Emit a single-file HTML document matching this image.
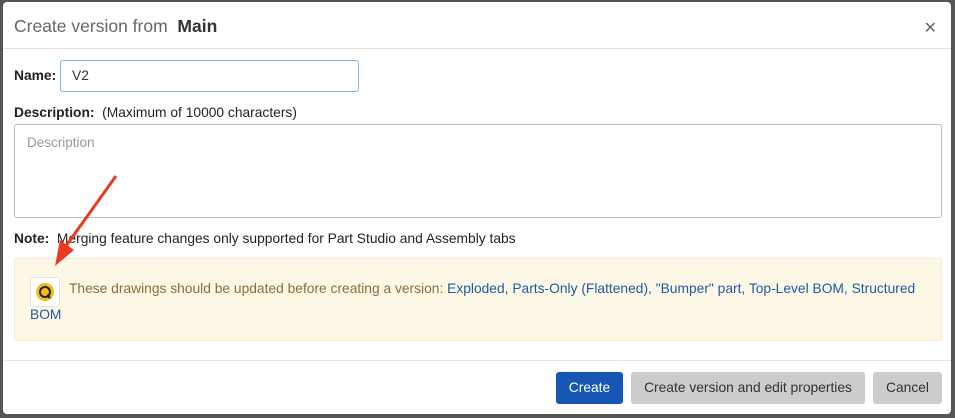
<!DOCTYPE html>
<html><head><style>
body{margin:0;width:955px;height:418px;background:#555;font-family:"Liberation Sans",sans-serif;overflow:hidden;position:relative}
.dlg{position:absolute;left:3px;top:2px;width:948px;height:412px;background:#fff;border-radius:4px}
.hdr{position:absolute;left:0;top:0;right:0;height:46px;border-bottom:1px solid #e6e0e0}
.title{position:absolute;left:11px;top:14px;font-size:17.5px;color:#666}
.title b{color:#333}
.x{position:absolute;right:14px;top:16px;font-size:16px;color:#666}
.lbl{font-weight:bold;color:#222}
.t{position:absolute;font-size:13.8px;color:#222}
.inp{position:absolute;left:57px;top:58px;width:299px;height:32px;border:1.5px solid #7bb8dc;border-radius:3px;font-size:13.8px;color:#333;line-height:29px;padding-left:11px;box-sizing:border-box}
.ta{position:absolute;left:11px;top:122px;width:928px;height:94px;border:1px solid #bbb;border-radius:3px;box-sizing:border-box}
.ta span{position:absolute;left:12px;top:10px;font-size:13.5px;color:#999}
.warn{position:absolute;left:11px;top:256px;width:928px;height:83px;background:#fdf8e5;border:1px solid #f5ecd0;border-radius:2px;box-sizing:border-box}
.ico{position:absolute;left:15px;top:18px;width:28px;height:28px;background:#fff;border:1px solid #e3e3e3;border-radius:3px}
.wt{position:absolute;width:880px;font-size:13.8px;color:#8a6d3b;line-height:26px;white-space:nowrap}
.wt a{color:#1f5aa3;text-decoration:none}
.ftr{position:absolute;left:0;right:0;top:358px;border-top:1px solid #e6e6e6}
.btn{position:absolute;top:370px;height:32px;line-height:32px;font-size:13.8px;border-radius:3px;text-align:center}
</style></head><body>
<div class="dlg">
<div class="hdr"><div class="title">Create version from&nbsp; <b>Main</b></div><div class="x">&#x2715;</div></div>
<div class="t" style="left:11px;top:66px"><span class="lbl">Name:</span></div>
<div class="inp">V2</div>
<div class="t" style="left:11px;top:103px"><span class="lbl">Description:</span>&nbsp; (Maximum of 10000 characters)</div>
<div class="ta"><span>Description</span></div>
<div class="t" style="left:11px;top:229px"><span class="lbl">Note:</span>&nbsp; Merging feature changes only supported for Part Studio and Assembly tabs</div>
<div class="warn">
<div class="ico"><svg width="28" height="28"><circle cx="14" cy="14" r="9" fill="#f2bb1a"/><circle cx="14" cy="14" r="5" fill="none" stroke="#222" stroke-width="2"/><path d="M16 17 l3 3" stroke="#222" stroke-width="2"/></svg></div>
<div class="wt" style="left:54px;top:17px">These drawings should be updated before creating a version: <a>Exploded, Parts-Only (Flattened), "Bumper" part, Top-Level BOM, Structured</a></div>
<div class="wt" style="left:15px;top:43px"><a>BOM</a></div>
</div>
<div class="ftr"></div>
<div class="btn" style="left:553px;width:67px;background:#1656b4;color:#fff">Create</div>
<div class="btn" style="left:628px;width:234px;background:#ccc;color:#333">Create version and edit properties</div>
<div class="btn" style="left:870px;width:69px;background:#ccc;color:#333">Cancel</div>
</div>
<svg style="position:absolute;left:0;top:0" width="955" height="418"><line x1="116" y1="176" x2="66" y2="246" stroke="#e83b22" stroke-width="3"/><polygon points="55,266 60,240 74,250" fill="#e83b22"/></svg>
</body></html>
